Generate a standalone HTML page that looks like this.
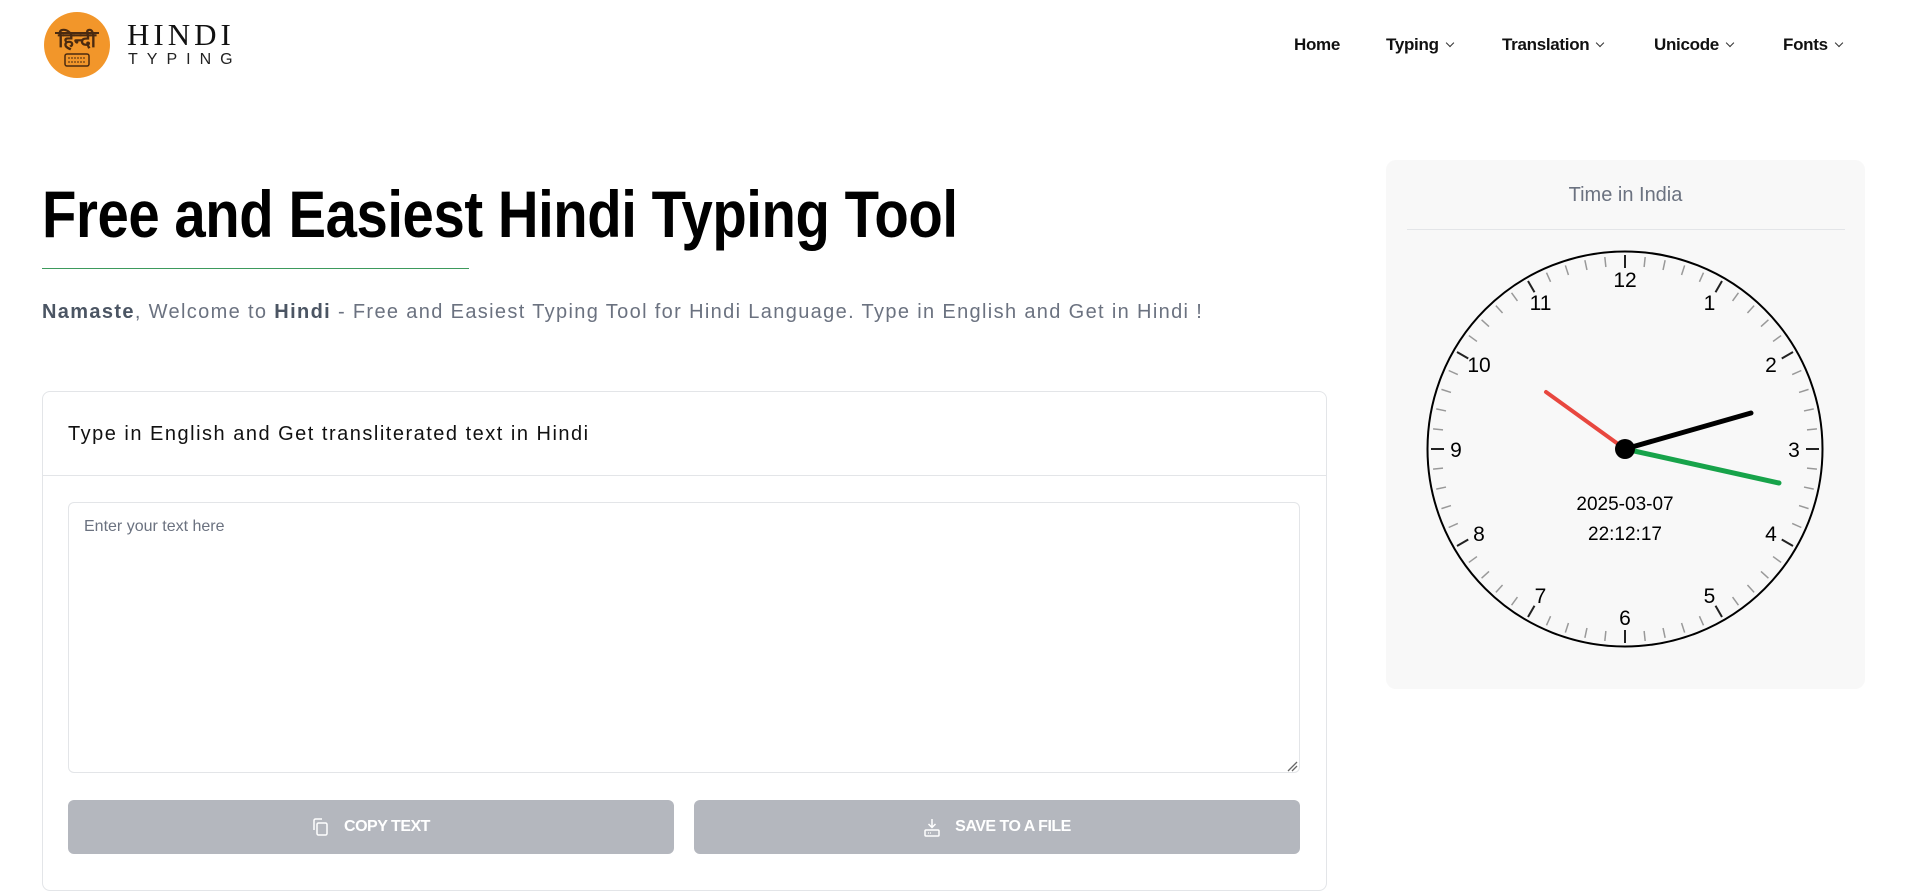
<!DOCTYPE html>
<html><head><meta charset="utf-8"><style>
*{box-sizing:border-box;margin:0;padding:0}
body{width:1910px;height:872px;overflow:hidden;background:#fff;font-family:"Liberation Sans",sans-serif;position:relative}
.abs{position:absolute}
.nav{font-size:17px;color:#111;font-weight:bold;top:35px;letter-spacing:-0.3px}
.nav span.c{display:inline-block;width:6px;height:6px;border-right:1.3px solid #333;border-bottom:1.3px solid #333;transform:rotate(45deg);margin-left:8px;position:relative;top:-4px}
h1{position:absolute;left:42px;top:176px;font-size:66px;font-weight:bold;color:#000;white-space:nowrap;transform-origin:left top;transform:scaleX(0.853);letter-spacing:-0.5px}
</style></head><body>
<svg class="abs" style="left:43px;top:11px" width="68" height="68" viewBox="0 0 68 68">
<circle cx="34" cy="34" r="33" fill="#f2962a"/>
<text x="34" y="36" text-anchor="middle" font-family="Noto Sans CJK SC,serif" font-size="20" fill="#4a2a10" font-weight="bold">हिन्दी</text>
<line x1="12" y1="22" x2="56" y2="22" stroke="#4a2a10" stroke-width="2"/>
<rect x="22" y="43" width="24" height="12" rx="2" fill="none" stroke="#4a2a10" stroke-width="1.5"/>
<line x1="25" y1="47" x2="43" y2="47" stroke="#4a2a10" stroke-dasharray="2 1"/>
<line x1="25" y1="51" x2="43" y2="51" stroke="#4a2a10" stroke-dasharray="2 1"/>
</svg>
<div class="abs" style="left:127px;top:17px;font-family:'Liberation Serif',serif;font-size:31px;letter-spacing:4px;color:#111">HINDI</div>
<div class="abs" style="left:128px;top:51px;font-size:16px;letter-spacing:9px;color:#222">TYPING</div>
<div class="abs nav" style="left:1294px">Home</div>
<div class="abs nav" style="left:1386px">Typing<span class="c"></span></div>
<div class="abs nav" style="left:1502px">Translation<span class="c"></span></div>
<div class="abs nav" style="left:1654px">Unicode<span class="c"></span></div>
<div class="abs nav" style="left:1783px">Fonts<span class="c"></span></div>

<h1>Free and Easiest Hindi Typing Tool</h1>
<div class="abs" style="left:42px;top:268px;width:427px;height:1px;background:#3d9a5c"></div>
<div class="abs" style="left:42px;top:301px;font-size:20px;color:#6b7280;white-space:nowrap;letter-spacing:1.35px"><b style="color:#4b5563">Namaste</b>, Welcome to <b style="color:#4b5563">Hindi</b> - Free and Easiest Typing Tool for Hindi Language. Type in English and Get in Hindi !</div>

<div class="abs" style="left:42px;top:391px;width:1285px;height:500px;border:1px solid #e3e5e8;border-radius:8px"></div>
<div class="abs" style="left:42px;top:475px;width:1285px;height:1px;background:#e3e5e8"></div>
<div class="abs" style="left:68px;top:423px;font-size:20px;color:#111;letter-spacing:1.5px">Type in English and Get transliterated text in Hindi</div>
<div class="abs" style="left:68px;top:502px;width:1232px;height:271px;border:1px solid #e3e5e8;border-radius:6px"></div>
<div class="abs" style="left:84px;top:518px;font-size:16px;color:#6b7280">Enter your text here</div>
<svg class="abs" style="left:1286px;top:760px" width="12" height="12"><path d="M2 11L11 2M6 11L11 6" stroke="#666" stroke-width="1.3"/></svg>

<div class="abs" style="left:68px;top:800px;width:606px;height:54px;background:#b4b7be;border-radius:6px;color:#fff;font-weight:bold;font-size:16px;display:flex;align-items:center;justify-content:center;letter-spacing:-0.5px">
<svg width="18" height="20" style="margin-right:14px" viewBox="0 0 18 20"><rect x="5" y="6" width="10" height="12" rx="1.5" fill="none" stroke="#fff" stroke-width="1.5"/><path d="M2 13V3.5C2 2.7 2.7 2 3.5 2H10" fill="none" stroke="#fff" stroke-width="1.5"/></svg>COPY TEXT</div>
<div class="abs" style="left:694px;top:800px;width:606px;height:54px;background:#b4b7be;border-radius:6px;color:#fff;font-weight:bold;font-size:16px;display:flex;align-items:center;justify-content:center;letter-spacing:-0.5px">
<svg width="18" height="20" style="margin-right:14px" viewBox="0 0 18 20"><path d="M9 2V10M5.5 7L9 10.5 12.5 7" fill="none" stroke="#fff" stroke-width="1.5"/><rect x="2" y="13" width="14" height="6" rx="1" fill="none" stroke="#fff" stroke-width="1.5"/><line x1="5" y1="16" x2="8" y2="16" stroke="#fff" stroke-width="1.2" stroke-dasharray="1 1"/></svg>SAVE TO A FILE</div>

<div class="abs" style="left:1386px;top:160px;width:479px;height:529px;background:#f8f8f8;border-radius:10px"></div>
<div class="abs" style="left:1386px;top:184px;width:479px;text-align:center;font-size:20px;color:#6b7280">Time in India</div>
<div class="abs" style="left:1407px;top:229px;width:438px;height:1px;background:#e3e5e8"></div>

<svg class="abs" style="left:1425px;top:249px" width="400" height="400" viewBox="-200 -200 400 400">
<circle r="197.5" fill="none" stroke="#000" stroke-width="2"/>
<g stroke="#999" stroke-width="1.5">
<g id="m"><line x1="0" y1="-193" x2="0" y2="-183"/></g>
<use href="#m" transform="rotate(6)"/><use href="#m" transform="rotate(12)"/><use href="#m" transform="rotate(18)"/><use href="#m" transform="rotate(24)"/>
<use href="#m" transform="rotate(36)"/><use href="#m" transform="rotate(42)"/><use href="#m" transform="rotate(48)"/><use href="#m" transform="rotate(54)"/>
<use href="#m" transform="rotate(66)"/><use href="#m" transform="rotate(72)"/><use href="#m" transform="rotate(78)"/><use href="#m" transform="rotate(84)"/>
<use href="#m" transform="rotate(96)"/><use href="#m" transform="rotate(102)"/><use href="#m" transform="rotate(108)"/><use href="#m" transform="rotate(114)"/>
<use href="#m" transform="rotate(126)"/><use href="#m" transform="rotate(132)"/><use href="#m" transform="rotate(138)"/><use href="#m" transform="rotate(144)"/>
<use href="#m" transform="rotate(156)"/><use href="#m" transform="rotate(162)"/><use href="#m" transform="rotate(168)"/><use href="#m" transform="rotate(174)"/>
<use href="#m" transform="rotate(186)"/><use href="#m" transform="rotate(192)"/><use href="#m" transform="rotate(198)"/><use href="#m" transform="rotate(204)"/>
<use href="#m" transform="rotate(216)"/><use href="#m" transform="rotate(222)"/><use href="#m" transform="rotate(228)"/><use href="#m" transform="rotate(234)"/>
<use href="#m" transform="rotate(246)"/><use href="#m" transform="rotate(252)"/><use href="#m" transform="rotate(258)"/><use href="#m" transform="rotate(264)"/>
<use href="#m" transform="rotate(276)"/><use href="#m" transform="rotate(282)"/><use href="#m" transform="rotate(288)"/><use href="#m" transform="rotate(294)"/>
<use href="#m" transform="rotate(306)"/><use href="#m" transform="rotate(312)"/><use href="#m" transform="rotate(318)"/><use href="#m" transform="rotate(324)"/>
<use href="#m" transform="rotate(336)"/><use href="#m" transform="rotate(342)"/><use href="#m" transform="rotate(348)"/><use href="#m" transform="rotate(354)"/>
</g>
<g stroke="#222" stroke-width="2">
<g id="h"><line x1="0" y1="-194" x2="0" y2="-181"/></g>
<use href="#h" transform="rotate(30)"/><use href="#h" transform="rotate(60)"/><use href="#h" transform="rotate(90)"/><use href="#h" transform="rotate(120)"/><use href="#h" transform="rotate(150)"/><use href="#h" transform="rotate(180)"/><use href="#h" transform="rotate(210)"/><use href="#h" transform="rotate(240)"/><use href="#h" transform="rotate(270)"/><use href="#h" transform="rotate(300)"/><use href="#h" transform="rotate(330)"/>
</g>
<g font-family="Liberation Sans,sans-serif" font-size="21" text-anchor="middle" fill="#000">
<text x="84.5" y="-139">1</text><text x="146" y="-77">2</text><text x="169" y="8">3</text><text x="146" y="92">4</text><text x="84.5" y="154">5</text><text x="0" y="176">6</text><text x="-84.5" y="154">7</text><text x="-146" y="92">8</text><text x="-169" y="8">9</text><text x="-146" y="-77">10</text><text x="-84.5" y="-139">11</text><text x="0" y="-162">12</text>
<text x="0" y="61" font-size="19">2025-03-07</text><text x="0" y="91" font-size="19">22:12:17</text>
</g>
<line x1="0" y1="0" x2="-79" y2="-57" stroke="#e8473f" stroke-width="4" stroke-linecap="round"/>
<line x1="0" y1="0" x2="126" y2="-36" stroke="#000" stroke-width="5" stroke-linecap="round"/>
<line x1="0" y1="0" x2="154" y2="34" stroke="#17a34a" stroke-width="5" stroke-linecap="round"/>
<circle r="10" fill="#000"/>
</svg>
</body></html>
